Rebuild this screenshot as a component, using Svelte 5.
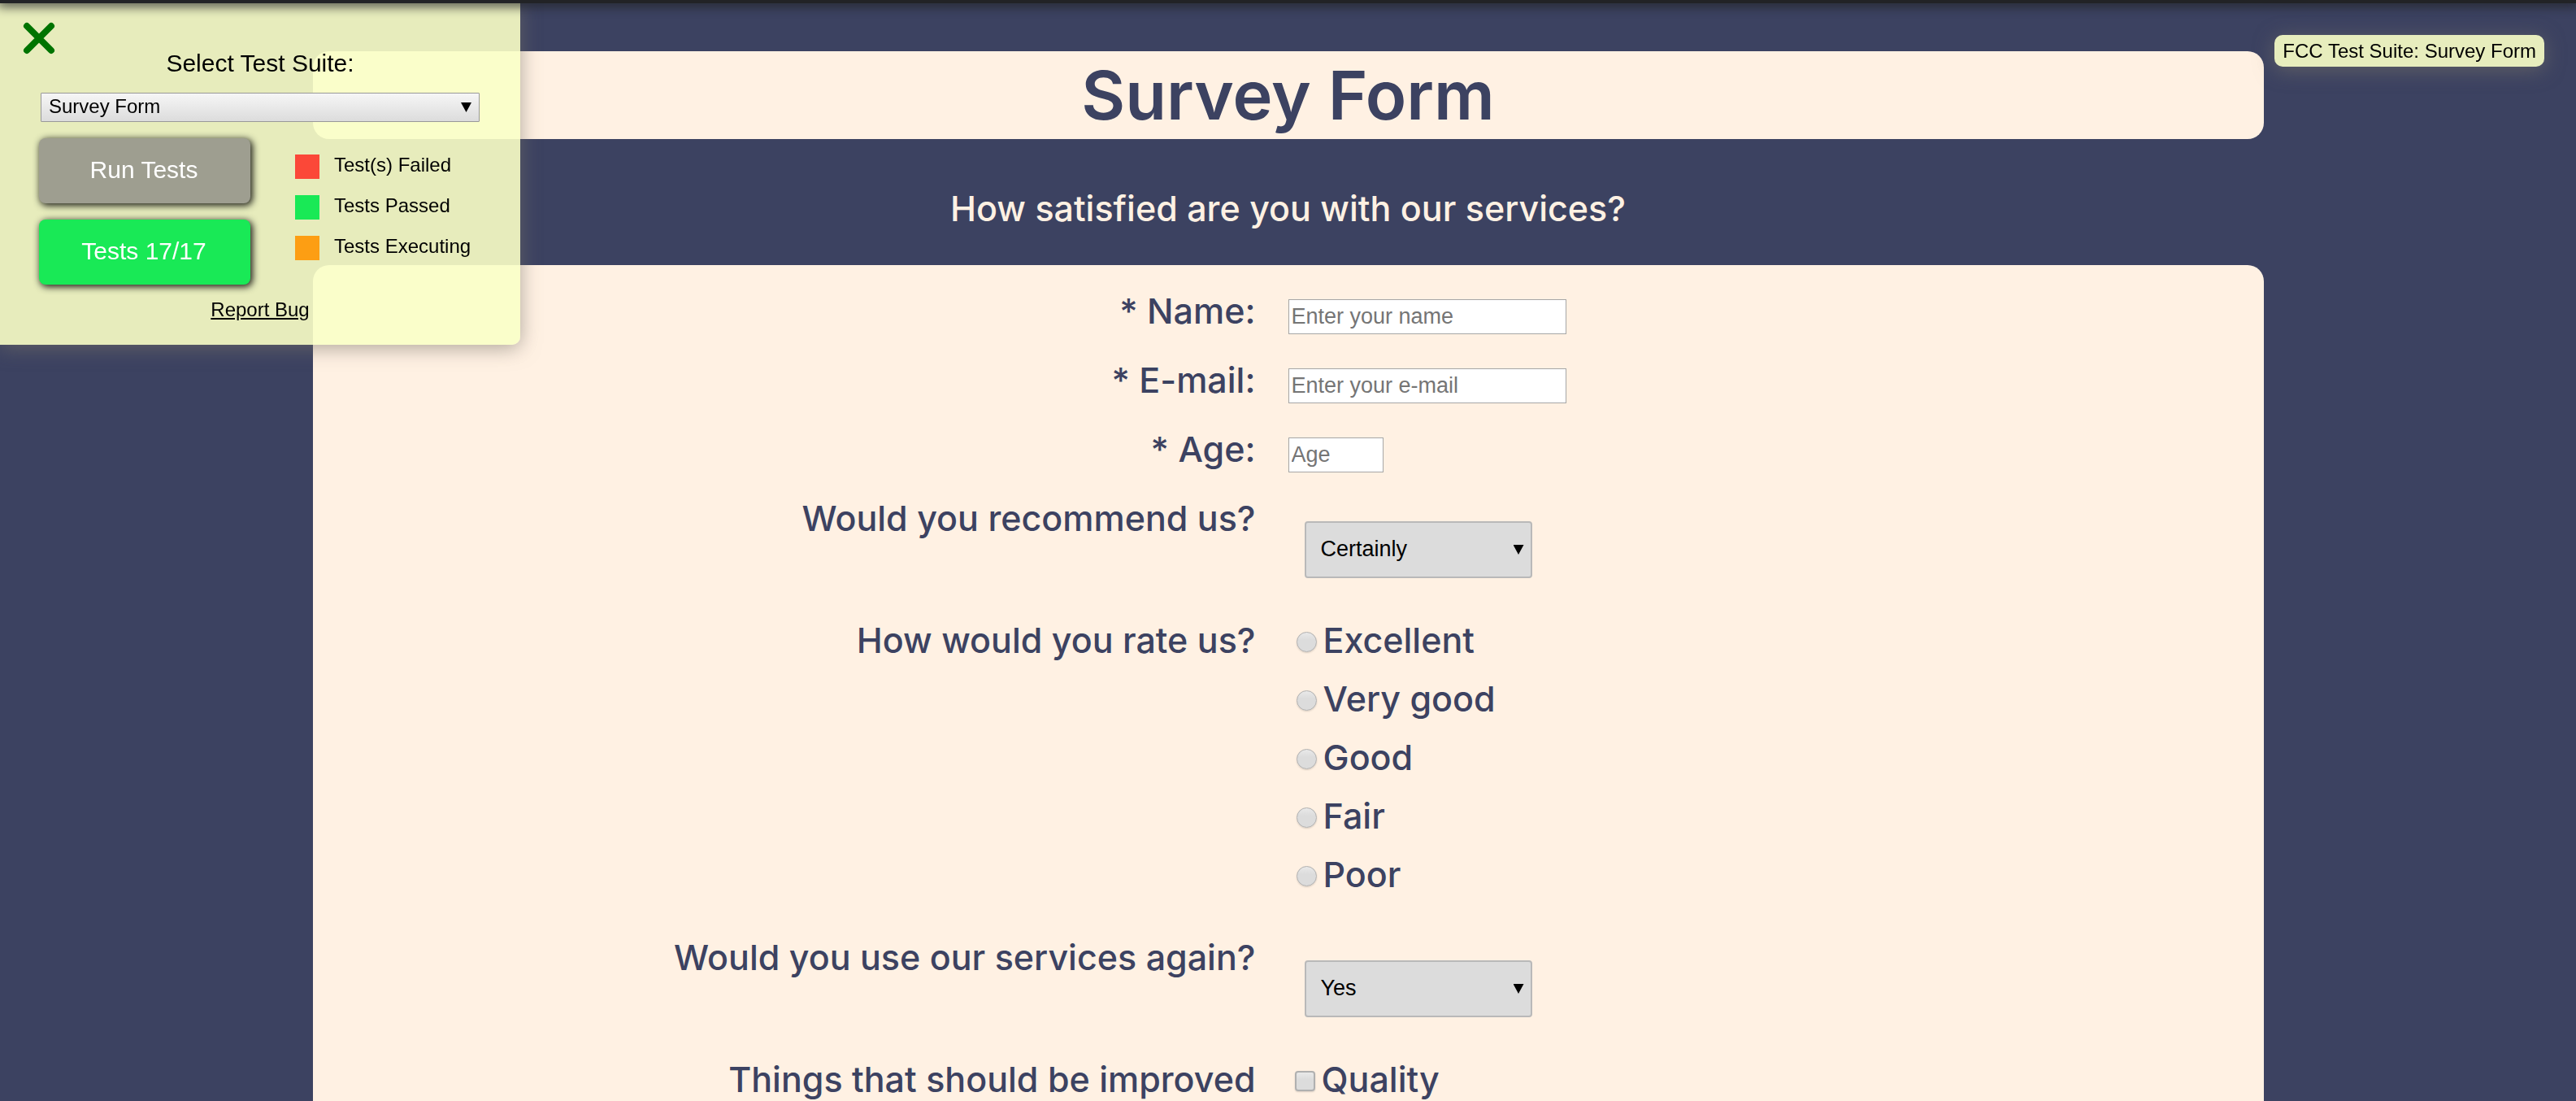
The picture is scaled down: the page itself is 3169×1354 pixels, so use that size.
<script>
  const suites = ['Survey Form', 'Tribute Page', 'Product Landing Page'];
  const legend = [
    { name: 'failed', text: 'Test(s) Failed' },
    { name: 'passed', text: 'Tests Passed' },
    { name: 'executing', text: 'Tests Executing' }
  ];
  const fields = [
    { id: 'name', label: '* Name:', type: 'text', hint: 'Enter your name' },
    { id: 'email', label: '* E-mail:', type: 'email', hint: 'Enter your e-mail' },
    { id: 'age', label: '* Age:', type: 'number', hint: 'Age' }
  ];
  const ratings = ['Excellent', 'Very good', 'Good', 'Fair', 'Poor'];
</script>

<div class="topbar"></div>

<aside class="panel">
  <button class="close" aria-label="Close">
    <svg viewBox="0 0 40 40" aria-hidden="true"><path d="M5 5L35 35M35 5L5 35" /></svg>
  </button>
  <label class="panel-title" for="suite">Select Test Suite:</label>
  <div class="picker suite">
    <select id="suite">
      {#each suites as s}<option>{s}</option>{/each}
    </select>
  </div>
  <div class="panel-body">
    <div class="buttons">
      <button class="run">Run Tests</button>
      <button class="result">Tests 17/17</button>
    </div>
    <ul class="legend">
      {#each legend as item}
        <li><span class="swatch {item.name}"></span><span>{item.text}</span></li>
      {/each}
    </ul>
  </div>
  <a class="bug" href="#report">Report Bug</a>
</aside>

<div class="badge">FCC Test Suite: Survey Form</div>

<main class="page">
  <h1>Survey Form</h1>
  <p class="description">How satisfied are you with our services?</p>
  <form>
    {#each fields as f}
      <div class="row">
        <label class="question" for={f.id}>{f.label}</label>
        <div><input class="text {f.id}" id={f.id} type={f.type} placeholder={f.hint} /></div>
      </div>
    {/each}
    <div class="row">
      <label class="question" for="recommend">Would you recommend us?</label>
      <div class="picker answer">
        <select id="recommend"><option>Certainly</option><option>Maybe</option><option>No</option></select>
      </div>
    </div>
    <div class="row" role="radiogroup" aria-labelledby="rate">
      <span class="question" id="rate">How would you rate us?</span>
      <div>
        {#each ratings as r}
          <label class="choice"><input type="radio" name="rating" value={r} />{r}</label>
        {/each}
      </div>
    </div>
    <div class="row">
      <label class="question" for="again">Would you use our services again?</label>
      <div class="picker answer">
        <select id="again"><option>Yes</option><option>No</option></select>
      </div>
    </div>
    <div class="row" role="group" aria-labelledby="improve">
      <span class="question" id="improve">Things that should be improved</span>
      <div>
        <label class="choice"><input type="checkbox" value="quality" />Quality</label>
      </div>
    </div>
  </form>
</main>

<style>
  :global(body) {
    background: #3c4261;
    font-family: 'Liberation Sans', Arial, sans-serif;
    color: #000;
  }
  * { box-sizing: border-box; }
  button, select, input {
    font-family: 'Liberation Sans', Arial, sans-serif;
    margin: 0;
  }

  .topbar {
    position: fixed;
    inset: 0 0 auto 0;
    height: 4px;
    background: #222326;
    box-shadow: 0 0 14px 3px #222326;
    z-index: 3;
  }

  .page {
    height: 100vh;
    width: 76%;
    max-width: 2400px;
    margin: 0 auto;
    padding-top: 63px;
    display: flex;
    flex-direction: column;
    overflow-y: auto;
    scrollbar-width: none;
    font-family: Inter, sans-serif;
    font-weight: 500;
    color: #3c4261;
  }
  h1 {
    flex: none;
    margin: 0;
    background: #fff1e3;
    border-radius: 20px;
    text-align: center;
    font-size: 83px;
    line-height: 108px;
    font-weight: 600;
  }
  .description {
    flex: none;
    margin: 0;
    padding: 60px 0 45px;
    text-align: center;
    color: #fff1e3;
    font-size: 43px;
    line-height: 50px;
  }
  form {
    flex: 1 0 auto;
    background: #fff1e3;
    border-radius: 20px 20px 0 0;
    padding-top: 34px;
    font-size: 43px;
    line-height: 45px;
  }
  .row {
    display: grid;
    grid-template-columns: 1fr 1fr;
    align-items: start;
    margin-bottom: 30px;
  }
  .row:last-child { margin-bottom: 0; }
  .question { text-align: right; padding-right: 40px; }
  .text {
    display: block;
    width: 342px;
    height: 43px;
    margin: 8px 0 4px;
    padding: 0 3px;
    border: 1px solid #a6a6a6;
    background: #fff;
    font-size: 27px;
  }
  .text.age { width: 117px; }
  .text::placeholder { color: #757575; opacity: 1; }

  .picker { position: relative; }
  .picker select {
    display: block;
    width: 100%;
    appearance: none;
    color: #000;
  }
  .picker::after {
    content: '';
    position: absolute;
    right: 10px;
    top: 50%;
    width: 13px;
    height: 12px;
    margin-top: -6px;
    background: #000;
    clip-path: polygon(0 0, 100% 0, 50% 100%);
    pointer-events: none;
  }
  .answer {
    width: 280px;
    margin: 26px 20px 24px;
  }
  .answer select {
    height: 70px;
    padding: 0 18px 2px;
    border: 2px solid #b9b9b9;
    border-radius: 4px;
    background: #dcdcdc;
    font-size: 27px;
  }

  .choice {
    display: flex;
    align-items: center;
    margin-bottom: 27px;
    padding-left: 8px;
  }
  .row:last-child .choice { margin-bottom: 0; }
  .choice input {
    appearance: none;
    flex: none;
    width: 25px;
    height: 25px;
    margin: 4px 8px 0 2px;
    border: 1px solid #b0b0b0;
    background: linear-gradient(#e9e9e9, #dcdcdc 40%);
    box-shadow: 0 1px 2px rgba(0, 0, 0, 0.15);
  }
  .choice input[type='radio'] { border-radius: 50%; }
  .choice input[type='checkbox'] {
    margin-left: 0;
    border: 2px solid #b0b0b0;
    border-radius: 4px;
  }

  .panel {
    position: fixed;
    left: 0;
    top: 0;
    width: 640px;
    padding: 58px 50px 28px;
    display: flex;
    flex-direction: column;
    background: rgba(250, 255, 199, 0.9);
    border-radius: 0 0 10px 0;
    box-shadow: 0 4px 24px rgba(120, 115, 105, 0.6);
    z-index: 2;
  }
  .close {
    position: absolute;
    left: 28px;
    top: 27px;
    width: 40px;
    height: 40px;
    padding: 0;
    border: 0;
    background: none;
  }
  .close svg { display: block; width: 40px; height: 40px; }
  .close path { stroke: #007400; stroke-width: 8; stroke-linecap: round; }
  .panel-title {
    text-align: center;
    font-size: 30px;
    line-height: 40px;
    margin-bottom: 16px;
  }
  .suite select {
    height: 36px;
    padding: 0 9px 3px;
    border: 1px solid #999;
    border-radius: 1px;
    background: linear-gradient(#f6f6f6, #dcdcdc);
    font-size: 24px;
  }
  .panel-body {
    display: flex;
    gap: 55px;
    margin: 20px 0 0 -2px;
  }
  .buttons { display: flex; flex-direction: column; gap: 20px; }
  .buttons button {
    width: 260px;
    height: 80px;
    padding: 0 8px 2px 6px;
    border: 0;
    border-radius: 8px;
    color: #fff;
    font-size: 30px;
    box-shadow: 2px 2px 8px 1px rgba(0, 0, 0, 0.85);
  }
  .buttons .run { background: #9e9e90; }
  .buttons .result { background: #19e956; }
  .legend {
    list-style: none;
    margin: 0;
    padding: 18px 0 0;
    display: flex;
    flex-direction: column;
    gap: 18px;
    font-size: 24px;
    line-height: 30px;
  }
  .legend li { display: flex; gap: 18px; }
  .swatch { width: 30px; height: 30px; margin-top: 2px; }
  .failed { background: #fb4838; }
  .passed { background: #19e956; }
  .executing { background: #fd9e13; }
  .bug {
    align-self: center;
    margin-top: 16px;
    color: #000;
    font-size: 24px;
    line-height: 30px;
  }

  .badge {
    position: fixed;
    right: 39px;
    top: 43px;
    padding: 0 10px;
    border-radius: 10px;
    background: #e7edbd;
    font-size: 24px;
    line-height: 39px;
    box-shadow: 0 4px 24px rgba(120, 115, 105, 0.6);
    z-index: 2;
  }
</style>
